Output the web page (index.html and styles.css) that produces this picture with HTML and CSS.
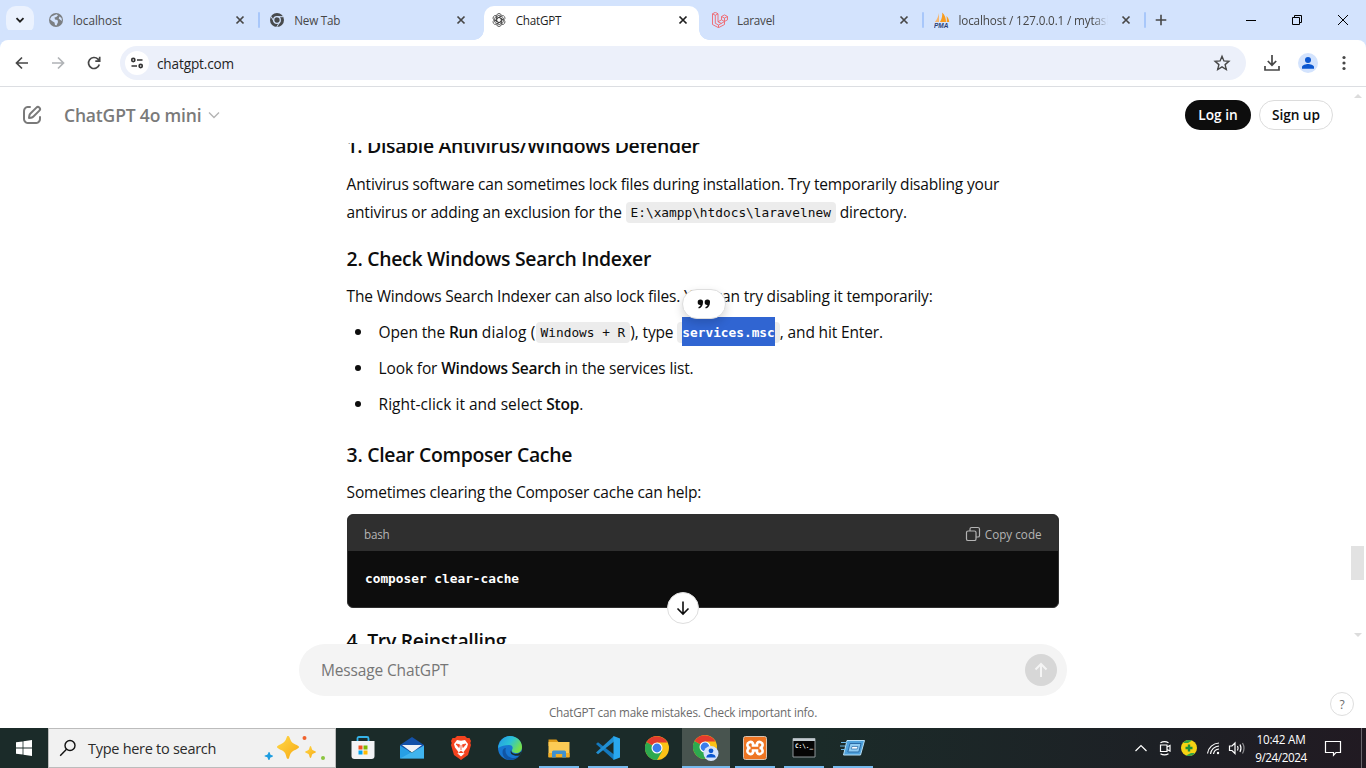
FILE: index.html
```html
<!DOCTYPE html>
<html lang="en">
<head>
<meta charset="utf-8">
<title>ChatGPT</title>
<link rel="stylesheet" href="styles.css">
</head>
<body>
<div class="desktop">
  <div class="tabstrip">
    <div class="tab-search"><svg width="10" height="10" viewBox="0 0 10 10"><path d="M1.500 3.200 5 6.700 8.500 3.200" fill="none" stroke="#1f1f1f" stroke-width="1.800"/></svg></div>
    <div class="tab">
      <svg class="fav" width="16" height="16" viewBox="0 0 16 16"><circle cx="8" cy="8" r="7" fill="#7b7f83"/><path d="M8.500 2.200 10 3.200 8.300 5 6.500 5.500 7 7.500 9.500 8 10 10 8.500 13.500 7 13 6.500 10.500 4 9 2 7.200 3.500 4.500zM11.500 4.500l2 1.500.5 3-1.500-1-1.800-1.500z" fill="#d3e3fd"/></svg>
      <span class="tab-title">localhost</span>
      <svg class="x" width="10" height="10" viewBox="0 0 10 10"><path d="m1.500 1.500 7 7m0-7-7 7"/></svg><i class="sep"></i>
    </div>
    <div class="tab">
      <svg class="fav" width="16" height="16" viewBox="0 0 16 16"><circle cx="8" cy="8" r="7" fill="#474a4d"/><circle cx="8" cy="8" r="3.300" fill="#474a4d" stroke="#d3e3fd" stroke-width="1.300"/><path d="M8 4.700h6.200M5.100 9.700 2 4.400M10.900 9.700l-3.200 5.400" stroke="#d3e3fd" stroke-width="1"/></svg>
      <span class="tab-title">New Tab</span>
      <svg class="x" width="10" height="10" viewBox="0 0 10 10"><path d="m1.500 1.500 7 7m0-7-7 7"/></svg>
    </div>
    <div class="tab active">
      <svg class="fav" width="16" height="16" viewBox="-2 -2 28 28"><g fill="none" stroke="#3a3a3a" stroke-width="1.300"><path id="petal" d="M12 7.300 16 9.600v6.200a4.300 4.300 0 0 1-6.500 3.700l-1-.6M12 7.300l5.200-3a4.300 4.300 0 0 1 4 7.200"/><use href="#petal" transform="rotate(60 12 12)"/><use href="#petal" transform="rotate(120 12 12)"/><use href="#petal" transform="rotate(180 12 12)"/><use href="#petal" transform="rotate(240 12 12)"/><use href="#petal" transform="rotate(300 12 12)"/></g></svg>
      <span class="tab-title">ChatGPT</span>
      <svg class="x" width="10" height="10" viewBox="0 0 10 10"><path d="m1.500 1.500 7 7m0-7-7 7"/></svg>
    </div>
    <div class="tab">
      <svg class="fav" width="16" height="16" viewBox="0 0 16 16"><path d="M.5 1.800 3.300.300 6 1.800v8l3.500-2V4.500l3-1.600L15.500 4.500v3.300l-3 1.700v3L6.500 15.700.5 12.500zM.5 1.800l2.800 1.500L6 1.800M3.300 3.300v8l3.200 1.700 6-3.500M6.500 13v2.700M9.500 4.500l3 1.600 3-1.600M12.500 6.100v3.400l-3-1.700M6 9.800l3.500 1.700" fill="none" stroke="#f0646b" stroke-width=".9"/></svg>
      <span class="tab-title">Laravel</span>
      <svg class="x" width="10" height="10" viewBox="0 0 10 10"><path d="m1.500 1.500 7 7m0-7-7 7"/></svg><i class="sep"></i>
    </div>
    <div class="tab">
      <svg class="fav" width="16" height="16" viewBox="0 0 16 16"><path d="M5 1v9H.8C2.800 8 4.500 4 5 1z" fill="#f6b56c"/><path d="M8.200.5C11 3 12 7 12 10H6C8 7 8.500 3 8.200.5zM12.500 4c2 2 2.600 4 2.700 6h-2.500c.3-2 .2-4-.2-6z" fill="#f89c1f"/><text x="0" y="15.500" class="pma">PMA</text></svg>
      <span class="tab-title fade">localhost / 127.0.0.1 / mytask</span>
      <svg class="x" width="10" height="10" viewBox="0 0 10 10"><path d="m1.500 1.500 7 7m0-7-7 7"/></svg><i class="sep"></i>
    </div>
    <svg class="new-tab" width="12" height="12" viewBox="0 0 12 12"><path d="M6 .7v10.600M.7 6h10.600" stroke="#474747" stroke-width="1.600"/></svg>
    <div class="window-controls">
      <svg width="12" height="12" viewBox="0 0 12 12"><path d="M1 6.500h10"/></svg>
      <svg width="12" height="12" viewBox="0 0 12 12"><path d="M1.500 3.500h7v7h-7zM3.500 3.500v-2h7v7h-2"/></svg>
      <svg width="12" height="12" viewBox="0 0 12 12"><path d="m1 1 10 10m0-10L1 11"/></svg>
    </div>
  </div>
  <div class="toolbar">
    <svg class="nav" width="16" height="16" viewBox="0 0 16 16"><path d="M14 8H3M8 2.500 2.500 8 8 13.500"/></svg>
    <svg class="nav dim" width="16" height="16" viewBox="0 0 16 16"><path d="M2 8h11M8 2.500 13.500 8 8 13.500"/></svg>
    <svg class="nav" width="16" height="16" viewBox="0 0 16 16"><path d="M13.300 9.500A5.500 5.500 0 1 1 12 4.200l1.500 1.600M13.700 1.800v4.400H9.300"/></svg>
    <div class="omnibox">
      <span class="site-info"><svg width="14" height="14" viewBox="0 0 14 14"><g fill="none" stroke="#333" stroke-width="1.600"><circle cx="3.300" cy="4" r="1.600"/><path d="M7 4h5.500M1.500 10H7"/><circle cx="10.700" cy="10" r="1.600"/></g></svg></span>
      <span class="url">chatgpt.com</span>
      <svg class="star" width="18" height="18" viewBox="0 0 18 18"><path d="m9 2.300 1.900 4.600 5 .4-3.800 3.300 1.200 4.900L9 12.900l-4.300 2.600 1.200-4.900L2.100 7.300l5-.4z" fill="none" stroke="#474747" stroke-width="1.400"/></svg>
    </div>
    <div class="actions">
      <svg width="18" height="18" viewBox="0 0 18 18"><path d="M9 1v10M4.800 7 9 11.200 13.200 7M2 12v4h14v-4" fill="none" stroke="#474747" stroke-width="1.700"/></svg>
      <span class="avatar"><svg width="20" height="20" viewBox="0 0 20 20"><circle cx="10" cy="7" r="3" fill="#0b57d0"/><path d="M4 15.800V14c0-2 4-3 6-3s6 1 6 3v1.800z" fill="#0b57d0"/></svg></span>
      <svg width="18" height="18" viewBox="0 0 18 18" fill="#474747"><circle cx="9" cy="3.500" r="1.600"/><circle cx="9" cy="9" r="1.600"/><circle cx="9" cy="14.500" r="1.600"/></svg>
    </div>
  </div>
  <div class="page">
    <div class="upper">
      <div class="main">
        <header class="chat-header">
          <svg width="24" height="24" viewBox="0 0 24 24" fill="#7a7a7a"><path d="M15.673 3.913a3.121 3.121 0 1 1 4.414 4.414l-5.937 5.937a5 5 0 0 1-2.828 1.415l-2.180.311a1 1 0 0 1-1.132-1.130l.311-2.180A5 5 0 0 1 9.736 9.850zm3 1.414a1.121 1.121 0 0 0-1.586 0l-5.937 5.937a3 3 0 0 0-.849 1.697l-.123.860.860-.122a3 3 0 0 0 1.698-.849l5.937-5.937a1.121 1.121 0 0 0 0-1.586M11 4a1 1 0 0 1-1 1c-.998 0-1.702.008-2.253.060-.540.052-.862.141-1.109.267a3 3 0 0 0-1.311 1.311c-.134.263-.226.611-.276 1.216C5.001 8.471 5 9.264 5 10.400v3.200c0 1.137 0 1.929.051 2.546.050.605.142.953.276 1.216a3 3 0 0 0 1.311 1.311c.263.134.611.226 1.216.276.617.050 1.410.051 2.546.051h3.200c1.137 0 1.929 0 2.546-.051.605-.050.953-.142 1.216-.276a3 3 0 0 0 1.311-1.311c.126-.247.215-.569.266-1.108.053-.552.060-1.256.060-2.255a1 1 0 1 1 2 .002c0 .978-.006 1.780-.069 2.442-.064.673-.192 1.270-.475 1.827a5 5 0 0 1-2.185 2.185c-.592.302-1.232.428-1.961.487C15.600 21 14.727 21 13.643 21h-3.286c-1.084 0-1.958 0-2.666-.058-.728-.060-1.369-.185-1.960-.487a5 5 0 0 1-2.186-2.185c-.302-.592-.428-1.233-.487-1.961C3 15.600 3 14.727 3 13.643v-3.286c0-1.084 0-1.958.058-2.666.060-.729.185-1.369.487-1.961A5 5 0 0 1 5.730 3.545c.556-.284 1.154-.411 1.827-.475C8.219 3.007 9.021 3 10 3a1 1 0 0 1 1 1"/></svg>
          <span class="model">ChatGPT 4o mini</span>
          <svg class="caret" width="12" height="12" viewBox="0 0 12 12"><path d="m1 3.500 5 5 5-5" fill="none" stroke="#b4b4b4" stroke-width="1.400"/></svg>
          <div class="auth"><span class="btn dark">Log in</span><span class="btn light">Sign up</span></div>
        </header>
        <div class="thread">
          <article class="message">
            <h3>1. Disable Antivirus/Windows Defender</h3>
            <p>Antivirus software can sometimes lock files during installation. Try temporarily disabling your<br>antivirus or adding an exclusion for the <code>E:\xampp\htdocs\laravelnew</code> directory.</p>
            <h3>2. Check Windows Search Indexer</h3>
            <p>The Windows Search Indexer can also lock files. You can try disabling it temporarily:</p>
            <ul>
              <li>Open the <b>Run</b> <span class="wide">dialog (</span><code>Windows + R</code>), type <code><mark>services.msc</mark></code>, and hit Enter.</li>
              <li>Look for <b>Windows Search</b> in the services list.</li>
              <li><span class="loose">Right-click it and select</span> <b>Stop</b>.</li>
            </ul>
            <h3>3. Clear Composer Cache</h3>
            <p>Sometimes clearing the Composer cache can help:</p>
            <div class="code-block">
              <div class="code-head"><span>bash</span><span class="copy"><svg width="16" height="16" viewBox="0 0 16 16"><g fill="none" stroke="#b4b4b4" stroke-width="1.200"><rect x="1.500" y="5" width="9.500" height="9.500" rx="1.600"/><path d="M5 5V3.100A1.600 1.600 0 0 1 6.600 1.500h6.300a1.600 1.600 0 0 1 1.600 1.600v6.300a1.600 1.600 0 0 1-1.600 1.600H11"/></g></svg><span>Copy code</span></span></div>
              <div class="code-body">composer clear-cache</div>
            </div>
            <h3>4. Try Reinstalling</h3>
          </article>
          <span class="quote-pop"><svg width="14" height="12" viewBox="0 0 14 12" fill="#0d0d0d"><path d="M3.300 1.500A2.600 2.600 0 0 1 6 4.300C6 7.500 4.500 9.800 1.800 10.600l-.5-1.400c1.300-.5 2-1.300 2.200-2.300A2.600 2.600 0 0 1 .7 4.200 2.600 2.600 0 0 1 3.300 1.500zm7 0A2.600 2.600 0 0 1 13 4.300c0 3.200-1.500 5.500-4.200 6.300l-.5-1.400c1.300-.5 2-1.300 2.200-2.300a2.600 2.600 0 0 1-2.800-2.700 2.600 2.600 0 0 1 2.600-2.700z"/></svg></span>
          <span class="scroll-down"><svg width="16" height="16" viewBox="0 0 16 16"><path d="M8 1.500v12M2.500 8.500 8 14l5.500-5.500" fill="none" stroke="#0d0d0d" stroke-width="1.600"/></svg></span>
        </div>
      </div>
      <div class="scrollbar"><i class="up"></i><i class="thumb"></i><i class="down"></i></div>
    </div>
    <div class="composer"><span>Message ChatGPT</span><span class="send"><svg width="18" height="18" viewBox="0 0 18 18"><path d="M9 16V3.500M3.500 8.500 9 3l5.500 5.500" fill="none" stroke="#f4f4f4" stroke-width="2"/></svg></span></div>
    <div class="note">ChatGPT can make mistakes. Check important info.</div>
    <span class="help">?</span>
  </div>
  <div class="taskbar">
    <div class="start"><svg width="16" height="16" viewBox="0 0 16 16" fill="#fff"><path d="M0 2.300 6.600 1.400v6.200H0zM7.400 1.300 16 0v7.600H7.400zM0 8.400h6.600v6.200L0 13.700zM7.400 8.400H16V16l-8.600-1.300z"/></svg></div>
    <div class="search">
      <svg width="18" height="18" viewBox="0 0 18 18"><g fill="none" stroke="#111" stroke-width="1.400"><circle cx="11" cy="6.500" r="5"/><path d="M7.500 10.200 1.200 16.700"/></g></svg>
      <span class="search-text">Type here to search</span>
      <svg class="sparkle" width="62" height="28" viewBox="0 0 62 28"><defs><linearGradient id="gold" x1="0" y1="0" x2="1" y2="1"><stop offset="0" stop-color="#ffd94a"/><stop offset="1" stop-color="#f7a912"/></linearGradient></defs><path d="M24 2c1.500 0 1.700 2 3 5s8 4 8 6-6 3-8 6-1.500 6-3 6-1.500-3-3-6-8-4-8-6 6-3 8-6 1.500-5 3-5z" fill="url(#gold)"/><path d="M46.500 12c1 0 1 3 2 4s3.500 1 3.500 2-2.500 1-3.500 2-1 4-2 4-1-3-2-4-3.500-1-3.500-2 2.500-1 3.500-2 1-4 2-4z" fill="url(#gold)"/><path d="M5 18c1 0 1 2 1.500 2.700S9 21 9 22s-1.800 1-2.500 1.500S6 26 5 26s-1-1.500-1.500-2.500S.5 23 .5 22s2-.7 3-1.500S4 18 5 18z" fill="#1e9de0"/><circle cx="40.500" cy="4" r="2" fill="#f0622d"/><circle cx="59" cy="24" r="2" fill="#8bc53f"/></svg>
    </div>
    <div class="apps">
      <span class="app"><svg width="24" height="24" viewBox="0 0 24 24"><path d="M6.500 6V2.500Q6.500 1 8 1h8q1.500 0 1.500 1.500V6" fill="none" stroke="#35b3e8" stroke-width="1.800"/><path d="M.5 5h23v15q0 3-3 3h-17q-3 0-3-3z" fill="#f2f3f5"/><path d="M7.500 9.500h4v4h-4z" fill="#f25022"/><path d="M12.500 9.500h4v4h-4z" fill="#7fba00"/><path d="M7.500 14.500h4v4h-4z" fill="#00a4ef"/><path d="M12.500 14.500h4v4h-4z" fill="#ffb900"/></svg></span>
      <span class="app"><svg width="24" height="24" viewBox="0 0 24 24"><path d="m0 9 12-8 12 8v6H0z" fill="#1451a8"/><path d="M2 9h20l-10 7.500z" fill="#f1f3f7"/><path d="M0 9.500 12 17 24 9.500V22.500H0z" fill="#279fe5"/><path d="m0 22.500 24-13v13z" fill="#55c4f7" opacity=".55"/></svg></span>
      <span class="app"><svg width="24" height="24" viewBox="0 0 24 24"><path d="M8 0h8l2 2h2.500L22 5l-.7 2L22 9l-3 10-7 5-7-5L2 9l.7-2L2 5l1.500-3H6z" fill="#f4431f"/><path d="m8 4 4 .8 4-.8 3 4-1 3.500-3.500 4.500 1 1.500-3.500 3-3.500-3 1-1.500L6 11.500 5 8z" fill="#fff"/><path d="m7 8 3.500.7-.5 2.800zM17 8l-3.500.7.500 2.800zM12 9v5M9.500 17l2.500-2 2.500 2" fill="#f4431f" stroke="#f4431f" stroke-width=".8"/></svg></span>
      <span class="app"><svg width="24" height="24" viewBox="0 0 24 24"><defs><linearGradient id="edge" x1="0" y1="0" x2="1" y2=".5"><stop offset="0" stop-color="#2494e8"/><stop offset=".55" stop-color="#2bc3d5"/><stop offset="1" stop-color="#75e04c"/></linearGradient></defs><circle cx="12" cy="12" r="12" fill="#1776d1"/><path d="M0 12C1 5 5.500 0 12 0c7 0 12 5 12 11 0 4-2.500 6-6 6-3 0-5-1.300-4-3 1.500-2.500.5-5-3-5-4 0-8 1-11 3z" fill="url(#edge)"/><path d="M8 12c-2 5 2 10 8 10 2 0 4-1 5.500-2.500C19 23 15 24 12 24 4 24 2 12 8 12z" fill="#1055a5"/><path d="M13.300 13.500C12.500 16 15 18.500 19 17.800c1.500-.3 3-1 4.300-2.300-.2 2-1 3-1.800 4-5 1-11-1-8.200-6z" fill="#1c2b29"/></svg></span>
      <span class="app open"><svg width="24" height="24" viewBox="0 0 24 24"><path d="M1.500 3.500h8l2 2.500v4h-10z" fill="#dd9a18"/><path d="M1.500 6H22.500v15h-21z" fill="#fccb55"/><path d="M1.500 17h21v4.500h-21z" fill="#f2ad24"/><path d="M5 21.500V16q0-1.500 1.500-1.500h11q1.500 0 1.500 1.500v5.500h-3.800V18H8.800v3.500z" fill="#3f91cf"/></svg></span>
      <span class="app open"><svg width="24" height="24" viewBox="0 0 24 24"><path d="m0 8 2-1.700L18 18.500V24z" fill="#1479be"/><path d="m0 16.500 2 1.700L18 5.500V0z" fill="#218fd2"/><path d="m17.500 0 6.500 2.500v19L17.500 24z" fill="#29a7ee"/></svg></span>
      <span class="app"><svg width="24" height="24" viewBox="0 0 24 24"><g id="chrome"><circle cx="12" cy="12" r="12" fill="#fbc116"/><path d="M12 12 1.600 6A12 12 0 0 0 12 24l5.200-9z" fill="#2da94f"/><path d="M12 12 1.600 6A12 12 0 0 1 22.400 6.500H12z" fill="#e33b2e"/><circle cx="12" cy="12" r="5.500" fill="#fff"/><circle cx="12" cy="12" r="4.400" fill="#3b7ded"/></g></svg></span>
      <span class="app open current"><svg width="26" height="26" viewBox="0 0 26 26"><use href="#chrome"/><circle cx="18" cy="18.500" r="7.500" fill="#d3e3fd"/><circle cx="18" cy="15.800" r="2.400" fill="#0b57d0"/><path d="M13.300 22.500c0-2.500 2.500-3.500 4.700-3.500s4.700 1 4.700 3.500z" fill="#0b57d0"/></svg></span>
      <span class="app open"><svg width="24" height="24" viewBox="0 0 24 24"><rect x=".5" y=".5" width="23" height="23" rx="2" fill="#ee7522" stroke="#d6c3b2"/><path d="M7.500 12a3 3 0 1 1 2.500-4.500v2h4v-2A3 3 0 1 1 16.500 12 3 3 0 1 1 14 16.500v-2h-4v2A3 3 0 1 1 7.500 12z" fill="none" stroke="#fff" stroke-width="2.600"/></svg></span>
      <span class="app open"><svg width="24" height="24" viewBox="0 0 24 24"><path d="M1 2.500h22v18.500H1z" fill="#050505" stroke="#8f979b"/><path d="M1 2.500h22v2.500H1z" fill="#c2cbd0"/><text x="3" y="12" class="prompt">C:\._</text></svg></span>
      <span class="app open"><svg width="26" height="24" viewBox="0 0 26 24"><path d="M7 4.500h17.500L20.500 19H3.500z" fill="#4fa2dc" stroke="#b8e0f7"/><path d="M10 7.500h11l-2.200 8.500h-11z" fill="#8ecbf2" stroke="#2b6ca8"/><path d="M12 10.500h6l-.8 2.500h-6z" fill="#fff" stroke="#2b6ca8" stroke-width=".7"/><path d="M1 6.500h6M0 10h5M1 13.500h4" stroke="#6fb7e5"/></svg></span>
    </div>
    <div class="tray">
      <svg class="t1" width="14" height="14" viewBox="0 0 14 14"><path d="M1.500 10 7 4.500l5.500 5.500"/></svg>
      <svg class="t2" width="16" height="16" viewBox="0 0 16 16"><path d="M3.500 5h6.500v6.500H3.500zM10 7l3-1.500v5.500l-3-1.500M3.500 2.800q4-2.500 8 0M3.500 13.700q4 2.500 8 0"/></svg>
      <svg class="t3" width="16" height="16" viewBox="0 0 16 16"><circle cx="8" cy="8" r="8" fill="#f5d313" stroke="none"/><path d="M2 3a8 8 0 0 1 9-2.500L7 3zM14 13a8 8 0 0 1-9 2.500L10 13z" fill="#35a244" stroke="none"/><path d="M8 4.500v7M4.500 8h7" stroke="#1c8f39" stroke-width="2.400"/></svg>
      <svg class="t4" width="16" height="16" viewBox="0 0 16 16"><path d="M1.500 13.500A12 12 0 0 1 13 3M4.500 14A9 9 0 0 1 13 6M7.500 14A6 6 0 0 1 13 9"/><circle cx="12" cy="13" r="1.200" fill="#fff" stroke="none"/></svg>
      <svg class="t5" width="18" height="16" viewBox="0 0 18 16"><path d="M1.500 6H4l3-3v10.500l-3-3H1.500zM9.500 6q1.300 2.200 0 4.500M12 4.500q2 3.700 0 7.500"/><path d="M14.500 3q3 5.200 0 10.500" opacity=".5"/></svg>
      <div class="clock"><span>10:42 AM</span><span class="date">9/24/2024</span></div>
      <svg class="t6" width="18" height="18" viewBox="0 0 18 18"><path d="M1.500 2.500h15v11h-4.500l-2.500 2.800v-2.800h-8z"/></svg>
      <i class="peek"></i>
    </div>
  </div>
</div>
</body>
</html>
```
FILE: styles.css
```css
* { box-sizing: border-box; }
body { margin: 0; font-family: "Open Sans", "Noto Sans", sans-serif; color: #0d0d0d; }
svg { display: block; flex: none; }
.desktop { width: 1366px; height: 768px; display: flex; flex-direction: column; overflow: hidden; background: #fff; white-space: nowrap; }

.tabstrip { height: 40px; flex: none; display: flex; align-items: center; background: #d3e3fd; }
.tab-search { width: 28px; height: 28px; margin: 0 0 0 6px; border-radius: 10px; background: #ebf2fe; display: grid; place-items: center; flex: none; }
.tab { width: 221.400px; height: 34px; margin-top: 6px; padding: 0 0 6px 8px; display: flex; align-items: center; flex: none; position: relative; font-size: 11.700px; color: #474747; }
.tab-search + .tab { margin-left: 6px; }
.fav { margin-right: 8.900px; }
.tab-title { width: 157.400px; overflow: hidden; letter-spacing: -.22px; }
.tab-search + .tab .tab-title { letter-spacing: -.02px; }
.fade { width: 149.400px; margin-right: 8px; letter-spacing: -.14px; -webkit-mask-image: linear-gradient(90deg, #000 90%, transparent); mask-image: linear-gradient(90deg, #000 90%, transparent); }
.x { margin-left: 4.700px; fill: none; stroke: #474747; stroke-width: 1.700; }
.sep { width: 2px; height: 16px; margin-left: 13px; border-radius: 1px; background: #a8c7fa; }
.active { color: #1f1f1f; z-index: 1; }
.active .x { stroke: #1f1f1f; }
.active::before { content: ""; position: absolute; z-index: -1; left: 1px; right: 5px; top: 0; bottom: 0; background: #fff; border-radius: 10px 10px 0 0; }
.active::after { content: ""; position: absolute; z-index: -1; left: -9px; right: -5px; bottom: 0; height: 10px; background: radial-gradient(circle at 0 0, transparent 9.500px, #fff 10px) left / 10px 10px no-repeat, radial-gradient(circle at 100% 0, transparent 9.500px, #fff 10px) right / 10px 10px no-repeat; }
.new-tab { margin-left: 8px; }
.window-controls { margin-left: auto; display: flex; }
.window-controls svg { margin: 0 17px; fill: none; stroke: #000; stroke-width: 1; }

.toolbar { height: 47px; flex: none; display: flex; align-items: center; background: #fff; border-bottom: 1px solid #dcdee2; box-shadow: 0 -10px #d3e3fd; border-radius: 8px 8px 0 0; padding: 0 13px 0 14px; position: relative; }
.nav { margin-right: 20px; fill: none; stroke: #474747; stroke-width: 1.700; }
.dim { stroke: #b0b3b6; }
.omnibox { width: 1126px; height: 34px; margin-left: -2px; border-radius: 17px; background: #ecf0fa; display: flex; align-items: center; padding: 0 15px 0 5px; flex: none; }
.site-info { width: 24px; height: 24px; border-radius: 50%; background: #fff; display: grid; place-items: center; margin-right: 8px; }
.url { font-size: 13.600px; letter-spacing: -.15px; color: #1f1f1f; }
.star { margin-left: auto; }
.actions { display: flex; gap: 17px; align-items: center; margin-left: 17px; }
.avatar { border-radius: 50%; background: #d3e3fd; }

.page { height: 641px; flex: none; position: relative; background: #fff; }
.upper { height: 557px; display: flex; }
.main { width: 1349px; display: flex; flex-direction: column; }
.chat-header { height: 56px; flex: none; display: flex; align-items: center; padding: 0 16px 0 20px; }
.model { margin-left: 20px; font-size: 17.500px; letter-spacing: -.17px; font-weight: 600; color: #7a7a7a; }
.caret { margin-left: 7px; }
.auth { margin-left: auto; display: flex; gap: 8px; font-size: 13.700px; font-weight: 600; }
.btn { height: 30px; border-radius: 15px; display: grid; place-items: center; padding-bottom: 2px; }
.dark { width: 66px; background: #0d0d0d; color: #fff; }
.light { width: 74px; border: 1px solid #dcdcdc; letter-spacing: -.07px; }
.thread { height: 501px; position: relative; overflow: hidden; padding-left: 346.600px; }
.message { width: 712px; margin-top: -13px; font-size: 15.500px; letter-spacing: -.178px; line-height: 28px; }
h3 { font-size: 19.400px; letter-spacing: -.29px; line-height: 32px; font-weight: 600; margin: 16px 0 7px; padding-top: 1px; }
h3:first-child { margin-top: 0; padding: 0 0 1px; letter-spacing: -.32px; }
p { margin: 0 0 8px; }
ul { margin: 0 0 20px; padding: 0; list-style: none; }
li { margin-bottom: 8px; padding-left: 32px; position: relative; letter-spacing: -.14px; }
li::before { content: ""; position: absolute; left: 8px; top: 11px; width: 6px; height: 6px; border-radius: 50%; background: #0d0d0d; }
b { font-weight: 600; letter-spacing: -.22px; }
.loose { letter-spacing: .01px; }
.wide { letter-spacing: .2px; }
code { font: 12.800px/20px "DejaVu Sans Mono", monospace; letter-spacing: 0; vertical-align: 1px; padding: 3px 5px; border-radius: 4px; background: #ececec; }
mark { background: #3065d2; color: #fff; font-weight: 700; padding: 8px 0 6px; }
.code-block { height: 94px; margin: 0 0 16px .4px; border: 1px solid #2f2f2f; border-radius: 6px; background: #0d0d0d; overflow: hidden; letter-spacing: 0; }
.code-head { height: 36px; background: #2f2f2f; color: #b4b4b4; font-size: 11.700px; letter-spacing: -.2px; display: flex; align-items: center; justify-content: space-between; padding: 1px 16px 0; }
.copy { display: flex; align-items: center; gap: 4px; letter-spacing: 0; }
.code-body { padding: 13px 17px; font: 600 12.800px/29px "DejaVu Sans Mono", monospace; color: #fff; }
.quote-pop { position: absolute; left: 682px; top: 146px; width: 44px; height: 30px; border-radius: 15px; border: 1px solid #dedede; background: #fff; box-shadow: 0 4px 10px rgba(0,0,0,.16); display: grid; place-items: center; }
.scroll-down { position: absolute; left: 667px; top: 449px; width: 32px; height: 32px; border-radius: 50%; border: 1px solid #dedede; background: #fff; display: grid; place-items: center; }
.scrollbar { width: 17px; display: flex; flex-direction: column; align-items: center; padding: 7px 0 7px; }
.up, .down { width: 0; border: 4px solid transparent; border-top-width: 0; border-bottom: 4px solid #dcdcdc; }
.down { border-top: 4px solid #dcdcdc; border-bottom-width: 0; margin-top: auto; }
.thumb { width: 13px; height: 34px; margin-top: 448px; background: #e2e2e2; }
.composer { width: 768px; height: 52px; margin: 0 auto; border-radius: 26px; background: #f4f4f4; color: #767676; font-size: 15.500px; letter-spacing: -.15px; display: flex; align-items: center; justify-content: space-between; padding: 0 10px 0 22px; }
.send { width: 32px; height: 32px; border-radius: 50%; background: #d7d7d7; display: grid; place-items: center; }
.note { text-align: center; font-size: 11.700px; letter-spacing: -.2px; line-height: 16px; margin-top: 8px; color: #6b6b6b; }
.help { position: absolute; right: 12px; bottom: 12px; width: 24px; height: 24px; border: 1px solid #dedede; border-radius: 50%; display: grid; place-items: center; font-size: 12px; color: #6b6b6b; }

.taskbar { height: 40px; flex: none; display: flex; background: linear-gradient(90deg, #1b2b29 0%, #1b2b29 60%, #1d2025 85%, #211a22 100%); }
.start { width: 48px; display: grid; place-items: center; }
.search { width: 288px; border: 1px solid #bcbcbc; background: #f1f1f1; display: flex; align-items: center; padding: 0 9px 0 10px; font-size: 14.500px; letter-spacing: -.28px; color: #2b2b2b; }
.search-text { margin-left: 11px; }
.sparkle { margin-left: auto; }
.apps { display: flex; gap: 1px; padding-left: 3px; }
.app { width: 48px; height: 40px; display: grid; place-items: center; }
.open { background: linear-gradient(#76b9ed, #76b9ed) center bottom / 40px 2px no-repeat; }
.current { background: linear-gradient(#76b9ed, #76b9ed) bottom / 100% 2px no-repeat #48544f; }
.tray { margin-left: auto; width: 236px; display: flex; align-items: center; color: #fff; }
.tray svg { fill: none; stroke: #fff; stroke-width: 1.200; }
.t1 { margin-left: 4px; }
.t2, .t3, .t4 { margin-left: 9px; }
.t3 { margin-left: 8px; }
.t5 { margin-left: 6px; }
.t6 { margin-left: 17px; }
.clock { width: 52px; margin-left: 9px; padding-bottom: 1px; display: flex; flex-direction: column; align-items: center; font-size: 11.700px; letter-spacing: -.2px; line-height: 18px; }
.date { letter-spacing: -.42px; }
.peek { width: 1px; height: 40px; margin-left: auto; margin-right: 4px; background: #6a666c; }
.pma { font: italic 700 6.500px "Liberation Sans", sans-serif; fill: #2c3f75; }
.prompt { font: 700 6px "DejaVu Sans Mono", monospace; fill: #fff; }
```
